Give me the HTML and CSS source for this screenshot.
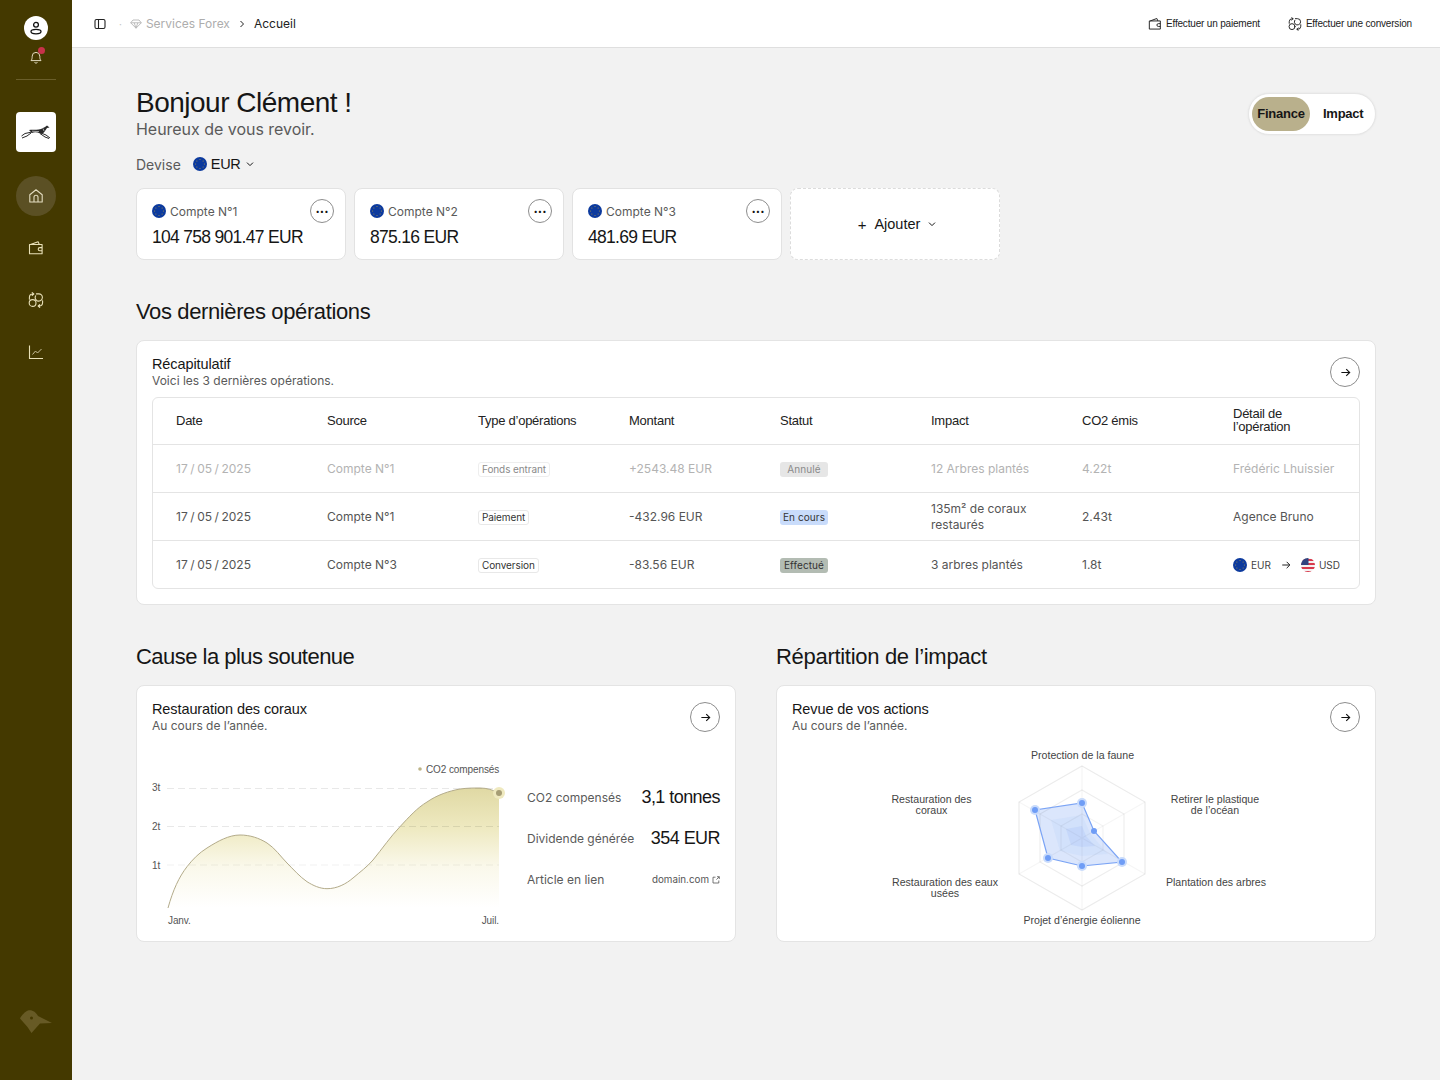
FILE: index.html
```html
<!DOCTYPE html>
<html lang="fr">
<head>
<meta charset="utf-8">
<title>Accueil</title>
<link rel="stylesheet" href="styles.css">
</head>
<body>
<svg class="defs" width="0" height="0" aria-hidden="true">
  <defs>
    <symbol id="eu" viewBox="0 0 14 14">
      <circle cx="7" cy="7" r="7" fill="#0c3a9e"/>
      <g fill="#b59a3c"><circle cx="7" cy="2.6" r=".5"/><circle cx="7" cy="11.4" r=".5"/><circle cx="2.6" cy="7" r=".5"/><circle cx="11.4" cy="7" r=".5"/><circle cx="3.9" cy="3.9" r=".5"/><circle cx="10.1" cy="3.9" r=".5"/><circle cx="3.9" cy="10.1" r=".5"/><circle cx="10.1" cy="10.1" r=".5"/></g>
    </symbol>
    <symbol id="us" viewBox="0 0 14 14">
      <clipPath id="usc"><circle cx="7" cy="7" r="7"/></clipPath>
      <g clip-path="url(#usc)">
        <rect width="14" height="14" fill="#f4f0f0"/>
        <path d="M0 1h14v2H0zM0 5h14v2H0zM0 9h14v2H0zM0 13h14v2H0z" fill="#d8394c"/>
        <rect width="7.5" height="7" fill="#31427e"/>
      </g>
    </symbol>
    <symbol id="wallet" viewBox="0 0 16 16" >
      <path d="M1.5 4.5h12.600v9.300H1.500zM2.500 4.500l7.600-2.800 1.200 2.800M14.100 7.600h-2.300a1.600 1.600 0 0 0 0 3.200h2.300" fill="none" stroke="currentColor" stroke-width="1.100" stroke-linejoin="round"/>
    </symbol>
    <symbol id="swap" viewBox="0 0 16 16">
      <g fill="none" stroke="currentColor" stroke-width="1.100" stroke-linecap="round" stroke-linejoin="round">
        <circle cx="4.600" cy="11" r="3.400"/>
        <path d="M8.400 1.900h2.400a3.600 3.600 0 0 1 3.600 3.600 3.400 3.400 0 0 1-2.200 3.200 3.400 3.400 0 0 1-3.900-.6 3.600 3.600 0 0 1-.6-4.300M1.400 7.200V5.400a3.400 3.400 0 0 1 3.300-3.400h1.100M4.200.6 5.800 2 4.200 3.400M14.600 8.800v1.800a3.400 3.400 0 0 1-3.400 3.400h-1M11.700 12.600 10.200 14l1.500 1.400"/>
      </g>
    </symbol>
    <symbol id="chev" viewBox="0 0 8 8"><path d="M1 2.600 4 5.600 7 2.600" fill="none" stroke="currentColor" stroke-width="1"/></symbol>
    <symbol id="arrow" viewBox="0 0 12 12"><path d="M1.500 6h9M6.800 2.200 10.600 6 6.800 9.800" fill="none" stroke="currentColor" stroke-width="1.200"/></symbol>
    <linearGradient id="area" x1="0" y1="0" x2="0" y2="1">
      <stop offset="0" stop-color="#e0d9a4"/>
      <stop offset=".33" stop-color="#eee9c0"/>
      <stop offset=".65" stop-color="#faf8ea"/>
      <stop offset="1" stop-color="#ffffff"/>
    </linearGradient>
  </defs>
</svg>

<div class="app">
  <aside class="sidebar">
    <div class="avatar">
      <svg viewBox="0 0 16 16" width="16" height="16"><circle cx="8" cy="4.800" r="2.400" fill="none" stroke="#111" stroke-width="1.300"/><ellipse cx="8" cy="11.600" rx="5" ry="2.200" fill="none" stroke="#111" stroke-width="1.300"/></svg>
    </div>
    <div class="bell">
      <svg viewBox="0 0 14 16" width="14" height="16"><path d="M2 11.600c1-1.200 1.200-2.400 1.200-4.400a3.800 3.800 0 0 1 7.600 0c0 2 .2 3.200 1.200 4.400zM5.600 13.200a1.500 1.500 0 0 0 2.800 0" fill="none" stroke="#e3dcc0" stroke-width="1"/></svg>
      <span class="bell-dot"></span>
    </div>
    <div class="side-rule"></div>
    <div class="logo">
      <svg viewBox="0 0 30 16" width="30" height="16">
        <path d="M8 6C12 5 16 6.500 20 5L24 3 26 1.500 28.500 3.500 26 4 24 7C23 9 21 10 19 9.500 16 8 13 8 11 9Z" fill="#2a2a2a"/>
        <path d="M11 8 4 9.500 .5 12M10 9 6 12 1 14M20 9 25 11 29 14M19 9.500 24 13 28 14.500" fill="none" stroke="#2a2a2a" stroke-width="1"/>
        <path d="M11 7.200 18 7.600M22 4.500 23 7" fill="none" stroke="#fff" stroke-width=".6"/>
      </svg>
    </div>
    <nav class="side-nav">
      <a class="side-link is-active" href="#"><svg viewBox="0 0 16 16" width="16" height="16"><path d="M1.800 14V6.700L8 1.800l6.200 4.900V14zM6 14V9.200a2 2 0 0 1 4 0V14" fill="none" stroke="#e3dcc0" stroke-width="1.100" stroke-linejoin="round"/></svg></a>
      <a class="side-link" href="#"><svg class="side-ico" width="16" height="16"><use href="#wallet"/></svg></a>
      <a class="side-link" href="#"><svg class="side-ico" width="16" height="16"><use href="#swap"/></svg></a>
      <a class="side-link" href="#"><svg viewBox="0 0 16 16" width="16" height="16"><path d="M1.500 1.500v13h13.500" fill="none" stroke="#e9e1b8" stroke-width="1.100"/><path d="M4.500 10.500 7.500 7l2 2 4-4" fill="none" stroke="#c9c19a" stroke-width="1"/></svg></a>
    </nav>
    <div class="bird">
      <svg viewBox="0 0 34 26" width="34" height="26"><path d="M1 9.500C2 7 6 2.500 9 1.500 13 .5 17 3 19 7L33 14 21 14.500 12.500 24 8.500 18Z" fill="#675a25"/><circle cx="12.500" cy="9" r="1.500" fill="#453900"/></svg>
    </div>
  </aside>

  <div class="content">
    <header class="topbar">
      <div class="crumbs">
        <svg width="12" height="12" viewBox="0 0 12 12" class="panel-ico"><rect x="1" y="1.500" width="10" height="9" rx="1.500" fill="none" stroke="#222" stroke-width="1.100"/><path d="M4.500 1.500v9" stroke="#222" stroke-width="1.100"/></svg>
        <span class="crumb-dot">·</span>
        <svg width="12" height="10" viewBox="0 0 12 10" class="gem"><path d="M3 1h6l2.300 2.800L6 9.200.7 3.800zM.7 3.800h10.600M4.200 3.800 6 9.200l1.800-5.400" fill="none" stroke="#b5b5b5" stroke-width=".9"/></svg>
        <span class="crumb-muted">Services Forex</span>
        <svg width="8" height="8" viewBox="0 0 8 8" class="crumb-sep"><path d="M2.500 1 5.500 4 2.500 7" fill="none" stroke="#222" stroke-width="1"/></svg>
        <span class="crumb-cur">Accueil</span>
      </div>
      <div class="top-actions">
        <a class="top-action" href="#"><svg width="14" height="14"><use href="#wallet"/></svg>Effectuer un paiement</a>
        <a class="top-action" href="#"><svg width="14" height="14"><use href="#swap"/></svg>Effectuer une conversion</a>
      </div>
    </header>

    <main class="main">
      <div class="hello-row">
        <div>
          <h1 class="hello">Bonjour Clément !</h1>
          <p class="hello-sub">Heureux de vous revoir.</p>
        </div>
        <div class="toggle">
          <span class="toggle-item is-on">Finance</span>
          <span class="toggle-item">Impact</span>
        </div>
      </div>

      <div class="currency">
        <span class="currency-label">Devise</span>
        <svg width="14" height="14"><use href="#eu"/></svg>
        <span class="currency-val">EUR</span>
        <svg width="8" height="8" class="currency-chev"><use href="#chev"/></svg>
      </div>

      <div class="accounts">
        <div class="account">
          <div>
            <div class="account-name"><svg width="14" height="14"><use href="#eu"/></svg>Compte N°1</div>
            <div class="account-amt">104 758 901.47 EUR</div>
          </div>
          <button class="round-btn small-dots">···</button>
        </div>
        <div class="account">
          <div>
            <div class="account-name"><svg width="14" height="14"><use href="#eu"/></svg>Compte N°2</div>
            <div class="account-amt">875.16 EUR</div>
          </div>
          <button class="round-btn small-dots">···</button>
        </div>
        <div class="account">
          <div>
            <div class="account-name"><svg width="14" height="14"><use href="#eu"/></svg>Compte N°3</div>
            <div class="account-amt">481.69 EUR</div>
          </div>
          <button class="round-btn small-dots">···</button>
        </div>
        <div class="account-add">
          <span class="plus">+</span><span>Ajouter</span><svg width="8" height="8"><use href="#chev"/></svg>
        </div>
      </div>

      <h2 class="section-title ops-title">Vos dernières opérations</h2>
      <section class="card card-ops">
        <div class="card-head">
          <div>
            <div class="card-title">Récapitulatif</div>
            <div class="card-sub">Voici les 3 dernières opérations.</div>
          </div>
          <button class="round-btn"><svg width="11" height="11"><use href="#arrow"/></svg></button>
        </div>
        <div class="table">
          <div class="tr th">
            <div>Date</div><div>Source</div><div>Type d’opérations</div><div>Montant</div><div>Statut</div><div>Impact</div><div>CO2 émis</div><div class="th-wrap">Détail de l’opération</div>
          </div>
          <div class="tr td is-faded">
            <div class="date">17 / 05 / 2025</div><div>Compte N°1</div><div><span class="tag">Fonds entrant</span></div><div>+2543.48 EUR</div><div><span class="status st-grey">Annulé</span></div><div>12 Arbres plantés</div><div>4.22t</div><div>Frédéric Lhuissier</div>
          </div>
          <div class="tr td">
            <div class="date">17 / 05 / 2025</div><div>Compte N°1</div><div><span class="tag">Paiement</span></div><div>-432.96 EUR</div><div><span class="status st-blue">En cours</span></div><div class="impact-wrap">135m² de coraux restaurés</div><div>2.43t</div><div>Agence Bruno</div>
          </div>
          <div class="tr td">
            <div class="date">17 / 05 / 2025</div><div>Compte N°3</div><div><span class="tag">Conversion</span></div><div>-83.56 EUR</div><div><span class="status st-green">Effectué</span></div><div>3 arbres plantés</div><div>1.8t</div>
            <div class="conv"><svg width="14" height="14"><use href="#eu"/></svg><span>EUR</span><svg width="10" height="10" class="conv-arrow"><use href="#arrow"/></svg><svg width="14" height="14"><use href="#us"/></svg><span>USD</span></div>
          </div>
        </div>
      </section>

      <div class="bottom">
        <div class="bottom-col">
          <h2 class="section-title cause-title">Cause la plus soutenue</h2>
          <section class="card card-low">
            <div class="card-head">
              <div>
                <div class="card-title">Restauration des coraux</div>
                <div class="card-sub">Au cours de l’année.</div>
              </div>
              <button class="round-btn"><svg width="11" height="11"><use href="#arrow"/></svg></button>
            </div>
            <div class="cause-body">
              <svg class="chart" viewBox="152 745 360 185" width="360" height="185">
                <path d="M168 908C173 890 179 877 187 866.700 193 859 199 853 207 848 218 841 229 835 240 835 250 835 259 838 267 843 275 848 281 857 287 863 293 869 300 877 307 881.700 313 885.500 320 888.700 327 888.700 337 888.700 346 884 353 878 360 872 367 867 373 860 382 849 391 836 400 826.700 409 817 417 808 427 802 437 795 449 791 460 789 467 788 473 788 480 788 487 788 493 790 499 793V908Z" fill="url(#area)"/>
                <g stroke="#000" stroke-opacity=".09" stroke-dasharray="7 4" stroke-width="1">
                  <path d="M167 788.500H499M167 826.500H499"/>
                  <path d="M167 865H499" stroke-opacity=".06"/>
                </g>
                <path d="M168 908C173 890 179 877 187 866.700 193 859 199 853 207 848 218 841 229 835 240 835 250 835 259 838 267 843 275 848 281 857 287 863 293 869 300 877 307 881.700 313 885.500 320 888.700 327 888.700 337 888.700 346 884 353 878 360 872 367 867 373 860 382 849 391 836 400 826.700 409 817 417 808 427 802 437 795 449 791 460 789 467 788 473 788 480 788 487 788 493 790 499 793" fill="none" stroke="#b3ab8a" stroke-width="1"/>
                <circle cx="499" cy="793" r="6" fill="#efe9bf"/>
                <circle cx="499" cy="793" r="3" fill="#a69d75"/>
                <circle cx="420" cy="769" r="1.800" fill="#bdb488"/>
                <text class="ch-txt" x="426" y="773">CO2 compensés</text>
                <text class="ch-txt" x="152" y="791">3t</text>
                <text class="ch-txt" x="152" y="830">2t</text>
                <text class="ch-txt" x="152" y="869">1t</text>
                <text class="ch-txt" x="168" y="924">Janv.</text>
                <text class="ch-txt" x="499" y="924" text-anchor="end">Juil.</text>
              </svg>
              <div class="stats">
                <div class="stat"><span class="stat-label">CO2 compensés</span><span class="stat-val">3,1 tonnes</span></div>
                <div class="stat"><span class="stat-label">Dividende générée</span><span class="stat-val">354 EUR</span></div>
                <div class="stat"><span class="stat-label">Article en lien</span><span class="stat-link">domain.com<svg width="8" height="8" viewBox="0 0 8 8"><path d="M3.500 1.200H1v5.800h5.800V4.500M4.400 3.600 7.200.8M5 .7h2.300V3" fill="none" stroke="#555" stroke-width=".8"/></svg></span></div>
              </div>
            </div>
          </section>
        </div>
        <div class="bottom-col">
          <h2 class="section-title">Répartition de l’impact</h2>
          <section class="card card-low">
            <div class="card-head">
              <div>
                <div class="card-title">Revue de vos actions</div>
                <div class="card-sub">Au cours de l’année.</div>
              </div>
              <button class="round-btn"><svg width="11" height="11"><use href="#arrow"/></svg></button>
            </div>
            <svg class="radar" viewBox="792 745 568 185" width="568" height="185">
              <path d="M1082 803 1094 831 1122 862 1082 866 1048 858 1035 810Z" fill="#dbe6fc"/>
              <path d="M1082 815 1090 833 1108 854 1082 856 1060 851 1051 820Z" fill="#c3d6fa" fill-opacity=".35"/>
              <path d="M1082 826 1086 836 1095 846 1082 847 1071 845 1066 829Z" fill="#b5cbf9" fill-opacity=".45"/>
              <g fill="none" stroke="#000" stroke-opacity=".05" stroke-width="1.200">
                <path d="M1082 766 1145 802V874L1082 910 1019 874V802Z" stroke-opacity=".08"/>
                <path d="M1082 790 1124 814V862L1082 886 1040 862V814Z" stroke-opacity=".07"/>
                <path d="M1082 814 1103 826V850L1082 862 1061 850V826Z"/>
                <path d="M1082 766V910M1019 802 1145 874M1145 802 1019 874" stroke-opacity=".04"/>
              </g>
              <path d="M1082 803 1094 831 1122 862 1082 866 1048 858 1035 810Z" fill="none" stroke="#7ba4f5" stroke-width="1.200"/>
              <g fill="#c9dbfb">
                <circle cx="1082" cy="803" r="5"/><circle cx="1122" cy="862" r="5"/><circle cx="1035" cy="810" r="5"/><circle cx="1048" cy="858" r="5"/><circle cx="1082" cy="866" r="5"/>
              </g>
              <g fill="#6f9df6">
                <circle cx="1082" cy="803" r="3"/><circle cx="1094" cy="831" r="3"/><circle cx="1122" cy="862" r="3"/><circle cx="1082" cy="866" r="3"/><circle cx="1048" cy="858" r="3"/><circle cx="1035" cy="810" r="3"/>
              </g>
              <g class="rad-txt">
                <text x="1082.500" y="759" text-anchor="middle">Protection de la faune</text>
                <text x="1215" y="803" text-anchor="middle">Retirer le plastique</text>
                <text x="1215" y="814" text-anchor="middle">de l’océan</text>
                <text x="1216" y="886" text-anchor="middle">Plantation des arbres</text>
                <text x="1082" y="924" text-anchor="middle">Projet d’énergie éolienne</text>
                <text x="945" y="886" text-anchor="middle">Restauration des eaux</text>
                <text x="945" y="897" text-anchor="middle">usées</text>
                <text x="931.500" y="803" text-anchor="middle">Restauration des</text>
                <text x="931.500" y="814" text-anchor="middle">coraux</text>
              </g>
            </svg>
          </section>
        </div>
      </div>
    </main>
  </div>
</div>
</body>
</html>
```
FILE: styles.css
```css
* { box-sizing: border-box; }
html, body { margin: 0; padding: 0; }
body {
  font-family: "Inter", "Liberation Sans", sans-serif;
  color: #161616;
  background: #f2f2f2;
}
.defs { position: absolute; }
a { color: inherit; text-decoration: none; }
svg { display: block; flex: none; }
.app { display: flex; min-height: 1080px; }

/* sidebar */
.sidebar {
  width: 72px;
  flex: none;
  background: #443900;
  display: flex;
  flex-direction: column;
  align-items: center;
  padding-top: 16px;
}
.avatar {
  width: 24px; height: 24px;
  border-radius: 50%;
  background: #fff;
  display: flex; align-items: center; justify-content: center;
}
.bell { position: relative; margin-top: 9px; height: 16px; }
.bell-dot {
  position: absolute; top: -2px; right: -2px;
  width: 7px; height: 7px; border-radius: 50%;
  background: #c8324a;
}
.side-rule { width: 40px; height: 1px; background: #6a5e2a; margin-top: 14px; }
.logo {
  width: 40px; height: 40px; margin-top: 32px;
  background: #fff; border-radius: 4px;
  display: flex; align-items: center; justify-content: center;
}
.side-nav { display: flex; flex-direction: column; align-items: center; gap: 12px; margin-top: 24px; }
.side-link {
  width: 40px; height: 40px; border-radius: 50%;
  display: flex; align-items: center; justify-content: center;
}
.side-link.is-active { background: #5b5024; }
.side-ico { color: #e9e1b8; }
.bird { margin-top: auto; margin-bottom: 45px; }

/* top bar */
.content { flex: 1; min-width: 0; }
.topbar {
  height: 48px;
  background: #fff;
  border-bottom: 1px solid #dfdfdf;
  display: flex; align-items: center; justify-content: space-between;
  padding: 0 28px 0 22px;
}
.crumbs { display: flex; align-items: center; font-size: 12px; }
.crumb-dot { color: #c4c4c4; margin: 0 8px 0 13px; font-size: 10px; }
.gem { margin-right: 4px; }
.crumb-muted { color: #adadad; }
.crumb-sep { margin: 0 8px; }
.crumb-cur { color: #222; }
.top-actions { display: flex; gap: 28px; }
.top-action {
  display: flex; align-items: center; gap: 4px;
  font-family: "Liberation Sans", sans-serif;
  font-size: 10px; color: #222; letter-spacing: -.18px;
}

/* main */
.main { padding: 40px 64px 0; }
.hello-row { display: flex; justify-content: space-between; align-items: flex-start; }
.hello {
  margin: 0;
  font-family: "Liberation Sans", sans-serif;
  font-weight: 400; font-size: 28px; line-height: 30px;
  letter-spacing: -.5px;
}
.hello-sub { margin: 1px 0 0; font-size: 16px; line-height: 20px; color: #5a5a5a; letter-spacing: -.03px; }
.toggle {
  width: 128px; height: 42px; margin-top: 5px;
  background: #fff; border-radius: 21px;
  border: 1px solid #e6e6e6;
  box-shadow: 0 0 2px #e0e0e0;
  display: flex; align-items: center; padding: 3px;
  font-family: "Liberation Sans", sans-serif;
  font-size: 13px; font-weight: 700; letter-spacing: -.25px;
}
.toggle-item { height: 34px; display: flex; align-items: center; justify-content: center; padding: 0 6px 1px; border-radius: 17px; }
.toggle-item.is-on { background: #b9b08c; width: 58px; margin-right: 7px; }

.currency { display: flex; align-items: center; margin-top: 15px; height: 20px; }
.currency-label { color: #5a5a5a; margin-right: 12px; font-size: 14px; }
.currency-val { margin-left: 4px; font-family: "Liberation Sans", sans-serif; font-size: 14.500px; letter-spacing: -.3px; }
.currency-chev { margin-left: 5px; }

.accounts { display: flex; gap: 8px; margin-top: 14px; }
.account, .account-add {
  width: 210px; height: 72px; background: #fff; border-radius: 8px;
}
.account {
  border: 1px solid #e2e2e2;
  padding: 14px 11px 0 15px;
  display: flex; justify-content: space-between; align-items: flex-start;
}
.account-name { display: flex; align-items: center; gap: 4px; font-size: 12px; color: #5a5a5a; height: 16px; }
.account-amt {
  font-family: "Liberation Sans", sans-serif;
  font-size: 17.500px; letter-spacing: -.7px; color: #161616;
  margin-top: 7px; line-height: 22px; white-space: nowrap;
}
.account-add {
  border: 1px dashed #dcdcdc;
  padding-left: 4px;
  display: flex; align-items: center; justify-content: center; gap: 8px;
  font-family: "Liberation Sans", sans-serif; font-size: 14.500px;
}
.plus { font-size: 15px; }
.round-btn {
  width: 24px; height: 24px; padding: 0;
  border: 1px solid #8d8d8d; border-radius: 50%;
  background: #fff; color: #111;
  display: flex; align-items: center; justify-content: center;
  flex: none;
}
.small-dots { font-size: 13px; font-weight: 700; font-family: "Inter", sans-serif; margin-top: -4px; line-height: 1; }

.section-title {
  margin: 0;
  font-family: "Liberation Sans", sans-serif;
  font-weight: 400; font-size: 22px; line-height: 26px; letter-spacing: -.3px;
}
.ops-title { margin-top: 39px; letter-spacing: -.38px; }
.cause-title { letter-spacing: -.53px; }
.card {
  background: #fff; border: 1px solid #e4e4e4; border-radius: 8px;
  padding: 16px 15px 15px;
}
.card-ops { margin-top: 15px; }
.card-head { display: flex; justify-content: space-between; align-items: flex-start; height: 30px; }
.card-head .round-btn { width: 30px; height: 30px; }
.card-title {
  font-family: "Liberation Sans", sans-serif;
  font-size: 14.500px; line-height: 16px; letter-spacing: -.1px;
  margin-top: -1px;
}
.card-sub { font-size: 12px; line-height: 16px; color: #5a5a5a; margin-top: 1px; }

/* table */
.table { margin-top: 10px; border: 1px solid #e4e4e4; border-radius: 6px; }
.tr {
  display: grid; grid-template-columns: repeat(7, 151px) 1fr;
  align-items: center; padding-left: 23px;
}
.th {
  height: 46px; padding-bottom: 2px;
  font-family: "Liberation Sans", sans-serif; font-size: 13px; letter-spacing: -.25px; color: #222;
}
.th-wrap { line-height: 13px; width: 90px; }
.td {
  height: 48px; border-top: 1px solid #e4e4e4;
  font-size: 12px; color: #555; line-height: 16px;
}
.date { word-spacing: -.8px; }
.is-faded { color: #b3b3b3; }
.impact-wrap { width: 120px; }
.tag {
  display: inline-block; font-size: 10px; line-height: 13px; padding: 0 3px;
  border: 1px solid #e8e8e8; border-radius: 3px; color: #333; letter-spacing: -.1px;
}
.is-faded .tag { color: #8a8a8a; border-color: #eeeeee; }
.status {
  display: inline-block; font-size: 10px; line-height: 15px; width: 48px;
  text-align: center; border-radius: 3px; letter-spacing: .1px;
}
.st-grey { background: #e6e6e6; color: #8a8a8a; }
.st-blue { background: #c9dcfb; color: #333; }
.st-green { background: #b3bcb3; color: #333; }
.conv { display: flex; align-items: center; gap: 4px; font-size: 10px; color: #444; }
.conv-arrow { margin: 0 6px 0 6px; color: #222; }

/* bottom */
.bottom { display: grid; grid-template-columns: 600px 600px; gap: 40px; margin-top: 39px; }
.card-low { margin-top: 15px; height: 257px; }
.cause-body { display: flex; margin-top: 13px; }
.chart, .radar { display: block; }
.radar { margin-top: 13px; }
.ch-txt { font-family: "Liberation Sans", sans-serif; font-size: 10px; letter-spacing: -.1px; fill: #555; }
.rad-txt text { font-family: "Liberation Sans", sans-serif; font-size: 10.600px; fill: #444; }
.stats { margin-left: 15px; width: 193px; padding-top: 32px; }
.stat { display: flex; justify-content: space-between; align-items: center; height: 41px; }
.stat-label { font-size: 12px; color: #5a5a5a; }
.stat-val { font-family: "Liberation Sans", sans-serif; font-size: 18px; letter-spacing: -.55px; color: #161616; }
.stat-link { display: flex; align-items: center; gap: 3px; font-size: 9.800px; color: #555; }
```
